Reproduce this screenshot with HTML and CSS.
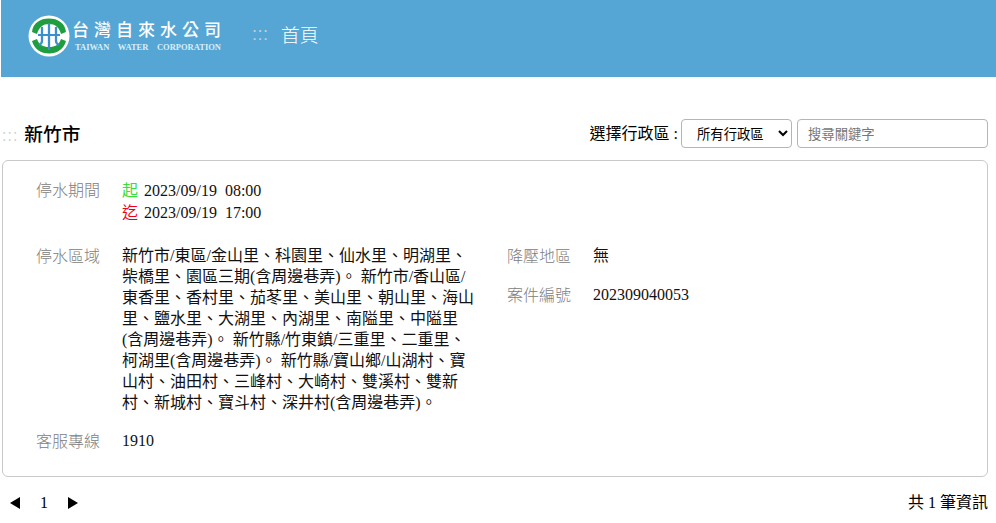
FILE: index.html
```html
<!DOCTYPE html>
<html lang="zh-Hant">
<head>
<meta charset="utf-8">
<title>首頁</title>
<link rel="stylesheet" href="styles.css">
</head>
<body>
<header class="site-header">
  <div class="brand">
    <svg class="logo" width="42" height="42" viewBox="0 0 42 42">
      <circle cx="21" cy="21" r="20.5" fill="#fff"/>
      <path d="M4 17 C5 8 12 3.500 21 3.500 C30 3.500 37 8 38 17 L33 19 C31 12 27 9 21 9 C15 9 11 12 9 19 Z" fill="#1f9e3f"/>
      <path d="M4 26 C6 34 13 38.500 21 38.500 C29 38.500 36 34 38 26 L33 24 C31 30 27 32 21 32 C15 32 11 30 9 24 Z" fill="#1f9e3f"/>
      <path d="M10 20 H32" fill="none" stroke="#3a8fd0" stroke-width="2"/>
      <path d="M14 12 V26 C14 28 13 29 11 30 M21 8 V35 M28 12 V26 C28 28 29 29 31 30" fill="none" stroke="#3a8fd0" stroke-width="2.300"/>
    </svg>
    <div class="brand-text">
      <div class="brand-zh">台灣自來水公司</div>
      <div class="brand-en"><span>TAIWAN</span><span>WATER</span><span>CORPORATION</span></div>
    </div>
  </div>
  <span class="crumb-dots">:::</span>
  <span class="crumb">首頁</span>
</header>

<main class="page">
  <div class="toolbar">
    <h1 class="title"><span class="title-dots">:::</span>新竹市</h1>
    <div class="filters">
      <label class="filter-label" for="area">選擇行政區 :</label>
      <select id="area" class="area-select"><option>所有行政區</option></select>
      <input class="search" type="text" placeholder="搜尋關鍵字">
    </div>
  </div>

  <section class="card">
    <div class="row period">
      <div class="label">停水期間</div>
      <div class="value">
        <div><span class="start">起</span>2023/09/19&nbsp; 08:00</div>
        <div><span class="end">迄</span>2023/09/19&nbsp; 17:00</div>
      </div>
    </div>
    <div class="columns">
      <div class="row area">
        <div class="label">停水區域</div>
        <div class="value wrap">新竹市/東區/金山里、科園里、仙水里、明湖里、柴橋里、園區三期(含周邊巷弄)。 新竹市/香山區/東香里、香村里、茄苳里、美山里、朝山里、海山里、鹽水里、大湖里、內湖里、南隘里、中隘里(含周邊巷弄)。 新竹縣/竹東鎮/三重里、二重里、柯湖里(含周邊巷弄)。 新竹縣/寶山鄉/山湖村、寶山村、油田村、三峰村、大崎村、雙溪村、雙新村、新城村、寶斗村、深井村(含周邊巷弄)。</div>
      </div>
      <div class="side">
        <div class="row side-row">
          <div class="label">降壓地區</div>
          <div class="value">無</div>
        </div>
        <div class="row side-row">
          <div class="label">案件編號</div>
          <div class="value">202309040053</div>
        </div>
      </div>
    </div>
    <div class="row">
      <div class="label">客服專線</div>
      <div class="value">1910</div>
    </div>
  </section>

  <footer class="pager">
    <div class="pages">
      <span class="arrow prev"></span>
      <span class="num">1</span>
      <span class="arrow next"></span>
    </div>
    <div class="total">共 1 筆資訊</div>
  </footer>
</main>
</body>
</html>
```
FILE: styles.css
```css
* { box-sizing: border-box; }
html, body { margin: 0; padding: 0; background: #fff; }
body {
  font-family: "Liberation Serif", "Noto Sans CJK TC", serif;
  font-size: 16px;
  line-height: 21px;
  color: #000;
  overflow: hidden;
}
.site-header {
  display: flex;
  align-items: center;
  height: 77px;
  margin-left: 1px;
  padding: 0 0 8px 27px;
  background: #55a6d5;
  color: #fff;
}
.brand { display: flex; align-items: center; gap: 3px; width: 224px; }
.logo { flex: none; margin-top: 3px; }
.brand-text { width: 149px; }
.brand-zh {
  font-family: "Noto Sans CJK TC", sans-serif;
  font-size: 17px;
  line-height: 22px;
  font-weight: 500;
  letter-spacing: 5px;
  white-space: nowrap;
  margin: 0 0 3px -1px;
}
.brand-en {
  display: flex;
  justify-content: space-between;
  padding: 0 1px 0 2px;
  font-size: 8.500px;
  line-height: 9px;
  font-weight: 700;
  color: #d8eef8;
  white-space: nowrap;
}
.crumb-dots { color: #c4cdd3; font-size: 18px; width: 29px; letter-spacing: 0.500px; font-family: "Liberation Sans", sans-serif; }
.crumb { font-family: "Noto Sans CJK TC", sans-serif; font-size: 18.720px; font-weight: 300; margin-bottom: 2px; }
.page { padding: 0 8px 0 2px; }
.toolbar {
  display: flex;
  justify-content: space-between;
  align-items: center;
  height: 30px;
  margin-top: 41px;
}
.title {
  margin: 0;
  font-family: "Noto Sans CJK TC", sans-serif;
  font-size: 18.720px;
  font-weight: 500;
  line-height: 30px;
  position: relative;
  top: 1px;
}
.title-dots { color: #cfcfcf; font-family: "Liberation Sans", sans-serif; font-size: 16px; font-weight: 400; margin-right: 6px; letter-spacing: 1px; }
.filters { display: flex; align-items: center; font-family: "Liberation Serif", "Noto Sans CJK TC", sans-serif; }
.filter-label { font-size: 16px; margin-right: 3px; white-space: nowrap; }
.area-select {
  width: 111px;
  height: 29px;
  font-family: "Noto Sans CJK TC", sans-serif;
  font-size: 13.330px;
  padding: 0 0 0 11px;
  margin-right: 5px;
  background: #fff;
  border: 1px solid #b5b5b5;
  border-radius: 4px;
  color: #000;
}
.search {
  width: 191px;
  height: 29px;
  font-family: "Noto Sans CJK TC", sans-serif;
  font-size: 13.330px;
  padding: 0 10px;
  border: 1px solid #b5b5b5;
  border-radius: 4px;
}
.search::placeholder { color: #777; }
.card {
  margin-top: 12px;
  height: 317px;
  padding: 18px 0 0 33px;
  border: 1px solid #c9c9c9;
  border-radius: 6px;
}
.row { display: flex; }
.label {
  flex: none;
  width: 85px;
  margin-right: 1px;
  color: #808080;
  font-family: "Noto Sans CJK TC", sans-serif;
  font-size: 16px;
  font-weight: 300;
}
.value { flex: 1; color: #111; }
.period { height: 66px; }
.start { color: #3bdc3b; margin-right: 6px; font-family: "Noto Sans CJK TC", sans-serif; }
.end { color: #f00018; margin-right: 6px; font-family: "Noto Sans CJK TC", sans-serif; }
.columns { display: flex; }
.area { width: 471px; height: 185px; }
.wrap { width: 355px; flex: none; }
.side { flex: 1; }
.side-row { height: 39px; }
.pager {
  display: flex;
  justify-content: space-between;
  align-items: center;
  margin-top: 15px;
  height: 21px;
}
.pages { display: flex; align-items: center; padding-left: 8px; }
.arrow { width: 0; height: 0; border-top: 6px solid transparent; border-bottom: 6px solid transparent; }
.prev { border-right: 10px solid #000; }
.next { border-left: 10px solid #000; }
.num { font-size: 16px; width: 48px; text-align: center; }
.total { font-size: 16px; }
```
